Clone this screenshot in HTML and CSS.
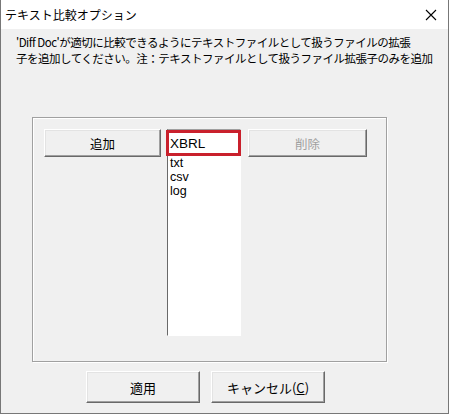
FILE: index.html
```html
<!DOCTYPE html>
<html lang="ja">
<head>
    <meta charset="UTF-8">
    <title>テキスト比較オプション</title>
    <link rel="stylesheet" href="styles.css">
</head>
<body>
    <div class="window">
        <div class="titlebar">
            <span class="title">テキスト比較オプション</span>
            <svg class="close" width="12" height="12" viewBox="0 0 12 12">
                <path d="M1 1 L11 11 M11 1 L1 11" stroke="#000" stroke-width="1.1" fill="none"/>
            </svg>
        </div>
        <div class="client">
            <p class="desc">'Diff Doc'が適切に比較できるようにテキストファイルとして扱うファイルの拡張<br>子を追加してください。注：テキストファイルとして扱うファイル拡張子のみを追加</p>

            <div class="group">
                <button class="btn btn-add">追加</button>
                <div class="listbox">
                    <div class="edit">XBRL</div>
                    <div class="item">txt</div>
                    <div class="item">csv</div>
                    <div class="item">log</div>
                </div>
                <button class="btn btn-del" disabled>削除</button>
            </div>

            <div class="actions">
                <button class="btn btn-big">適用</button>
                <button class="btn btn-big">キャンセル(<u>C</u>)</button>
            </div>
        </div>
    </div>
</body>
</html>
```

FILE: styles.css
```css
body {
    margin: 0;
    padding: 0;
    background: #fff;
    font-family: "Noto Sans CJK JP", "Liberation Sans", sans-serif;
}
.window {
    width: 449px;
    height: 414px;
    box-sizing: border-box;
    border-left: 1px solid #777;
    border-right: 1px solid #777;
    border-bottom: 1px solid #777;
    background: #f0f0f0;
    overflow: hidden;
}
.titlebar {
    height: 29px;
    background: #fff;
    display: flex;
    align-items: center;
    justify-content: space-between;
    padding: 0 11px 0 4px;
}
.title {
    font-size: 12px;
    color: #000;
}
.close {
    display: block;
}
.client {
    padding-top: 5px;
}
.desc {
    margin: 0;
    padding-left: 15px;
    font-size: 11.5px;
    line-height: 16px;
    letter-spacing: -0.5px;
    white-space: nowrap;
    color: #000;
}
.group {
    margin: 51px 0 0 31px;
    width: 355px;
    height: 245px;
    box-sizing: border-box;
    border: 1px solid #a0a0a0;
    box-shadow: inset 1px 1px 0 #fff, 1px 1px 0 #fff;
    display: flex;
    align-items: flex-start;
    padding: 11px 0 0 11px;
}
.btn {
    font-family: "Noto Sans CJK JP", "Liberation Sans", sans-serif;
    font-size: 12.5px;
    color: #000;
    background: #f0f0f0;
    border: 1px solid;
    border-color: #fff #696969 #696969 #fff;
    box-shadow: inset -1px -1px 0 #a0a0a0, inset 1px 1px 0 #e3e3e3;
    padding: 0;
    margin: 0;
}
.btn-add {
    width: 117px;
    height: 28px;
}
.btn-del {
    width: 119px;
    height: 28px;
    margin-left: 7px;
    color: #a0a0a0;
}
.listbox {
    margin-left: 6px;
    width: 74px;
    height: 207px;
    box-sizing: border-box;
    background: #fff;
    border: 1px solid;
    border-color: #a0a0a0 #fff #fff #696969;
    font-family: "Liberation Sans", sans-serif;
    font-size: 12.5px;
}
.edit {
    margin: 0 -1px 0 -2px;
    height: 26px;
    box-sizing: border-box;
    border: 3px solid #c9202c;
    background: #fff;
    padding: 2px 0 0 1px;
    font-size: 13.5px;
    line-height: 17px;
}
.item {
    height: 14px;
    line-height: 14px;
    padding-left: 2px;
}
.actions {
    display: flex;
    gap: 11px;
    margin: 9px 0 0 85px;
}
.btn-big {
    width: 114px;
    height: 32px;
    font-size: 13px;
}
```
